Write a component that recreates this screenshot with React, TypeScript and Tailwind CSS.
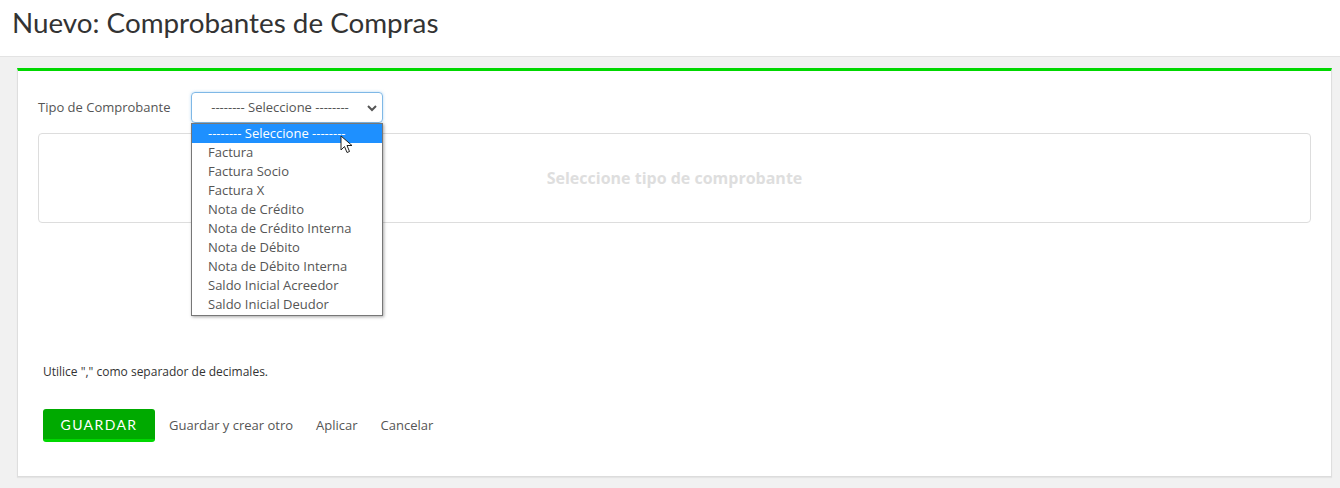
import React from "react";

const options = [
  "Factura",
  "Factura Socio",
  "Factura X",
  "Nota de Crédito",
  "Nota de Crédito Interna",
  "Nota de Débito",
  "Nota de Débito Interna",
  "Saldo Inicial Acreedor",
  "Saldo Inicial Deudor",
];

export default function App() {
  return (
    <div className="w-[1340px] h-[488px] bg-[#f1f1f1] overflow-hidden" style={{ fontFamily: '"Open Sans", sans-serif' }}>
      <div className="h-[57px] bg-white border-b border-[#e3e3e3] pl-[12px] flex items-center">
        <h1 className="text-[27.8px] leading-none text-[#333] font-['Lato',sans-serif] -mt-[10px]">Nuevo: Comprobantes de Compras</h1>
      </div>
      <div className="pl-[17px] pr-[8px] pt-[11px]">
        <div className="bg-white border-t-[3px] border-t-[#00d800] border-x border-b border-x-[#dedede] border-b-[#dcdcdc] shadow-[0_1px_1px_rgba(0,0,0,0.05)] h-[409px] px-[20px] pt-[21px]">
          <div className="flex items-center h-[31px]">
            <label className="w-[153px] text-[13px] text-[#555]">Tipo de Comprobante</label>
            <div className="relative">
              <div className="w-[192px] h-[31px] border border-[#7fb8e6] rounded-[4px] shadow-[0_0_3px_rgba(102,175,233,0.5)] flex items-center justify-center text-[13px] text-[#555] relative">
                <span className="-ml-[14px]">-------- Seleccione --------</span>
                <svg className="absolute right-[4px] top-[10px]" width="12" height="10" viewBox="0 0 12 10">
                  <path d="M2 3 L6 7 L10 3" fill="none" stroke="#555" strokeWidth="2" />
                </svg>
              </div>
              <div className="absolute left-0 top-[31px] w-[192px] bg-white border border-[#777] shadow-[1px_1px_3px_rgba(0,0,0,0.35)] z-10 text-[13px] text-[#555] pb-[1px]">
                <div className="h-[19px] bg-[#1e90ff] text-white pl-[16px] leading-[19px]">-------- Seleccione --------</div>
                {options.map((o) => (
                  <div key={o} className="h-[19px] pl-[16px] leading-[19px]">{o}</div>
                ))}
                <svg className="absolute left-[148px] top-[11px]" width="14" height="20" viewBox="0 0 14 20">
                  <path d="M1 1 L1 15 L4.5 11.5 L7 17.5 L9.5 16.5 L7 10.5 L12 10.5 Z" fill="white" stroke="#222" strokeWidth="1" strokeLinejoin="round" />
                </svg>
              </div>
            </div>
          </div>
          <div className="mt-[10px] h-[90px] border border-[#dddddd] rounded-[4px] flex items-center justify-center">
            <span className="text-[16px] font-bold text-[#dedede]">Seleccione tipo de comprobante</span>
          </div>
          <p className="mt-[141px] ml-[5px] text-[12px] text-[#333] leading-[16px]">Utilice "," como separador de decimales.</p>
          <div className="mt-[29px] ml-[5px] flex items-center">
            <button className="w-[112px] h-[33px] bg-[#00aa00] border-b-[3px] border-[#00d800] rounded-[3px] text-white text-[14px] tracking-[1.4px] font-['Lato',sans-serif] font-normal">GUARDAR</button>
            <a className="ml-[14px] text-[13px] text-[#555]">Guardar y crear otro</a>
            <a className="ml-[23px] text-[13px] text-[#555]">Aplicar</a>
            <a className="ml-[23px] text-[13px] text-[#555]">Cancelar</a>
          </div>
        </div>
      </div>
    </div>
  );
}
